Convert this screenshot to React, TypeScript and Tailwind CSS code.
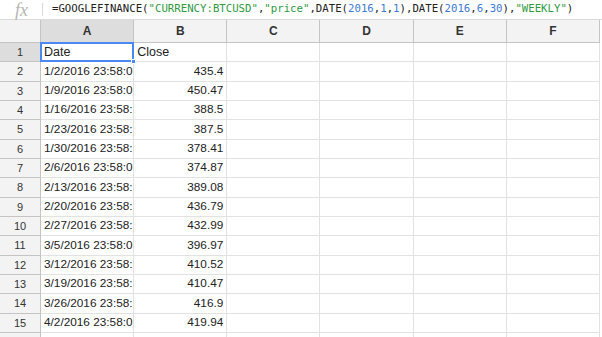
import React from "react";

// dates shown as the cells clip them
const rows: [string, string][] = [
  ["1/2/2016 23:58:0", "435.4"],
  ["1/9/2016 23:58:0", "450.47"],
  ["1/16/2016 23:58:", "388.5"],
  ["1/23/2016 23:58:", "387.5"],
  ["1/30/2016 23:58:", "378.41"],
  ["2/6/2016 23:58:0", "374.87"],
  ["2/13/2016 23:58:", "389.08"],
  ["2/20/2016 23:58:", "436.79"],
  ["2/27/2016 23:58:", "432.99"],
  ["3/5/2016 23:58:0", "396.97"],
  ["3/12/2016 23:58:", "410.52"],
  ["3/19/2016 23:58:", "410.47"],
  ["3/26/2016 23:58:", "416.9"],
  ["4/2/2016 23:58:0", "419.94"],
];

const cols = ["A", "B", "C", "D", "E", "F"];

const Str = ({ children }: { children: React.ReactNode }) => (
  <span className="text-[#2f9a3f]">{children}</span>
);
const Num = ({ children }: { children: React.ReactNode }) => (
  <span className="text-[#3d7ad6]">{children}</span>
);

function FormulaBar() {
  return (
    <div className="flex h-[20px] items-center border-b border-[#dadada] bg-white">
      <div className="flex w-[42px] items-center">
        <span className="ml-[15px] font-['Liberation_Serif',serif] text-[18px] italic leading-none text-[#b5b5b5]">
          fx
        </span>
      </div>
      <div className="h-[13px] w-px bg-[#d9d9d9]" />
      <div className="ml-[9px] whitespace-nowrap font-['DejaVu_Sans_Mono',monospace] text-[10.7px] leading-none text-[#222]">
        =GOOGLEFINANCE(<Str>"CURRENCY:BTCUSD"</Str>,<Str>"price"</Str>,DATE(
        <Num>2016</Num>,<Num>1</Num>,<Num>1</Num>),DATE(<Num>2016</Num>,<Num>6</Num>,
        <Num>30</Num>),<Str>"WEEKLY"</Str>)
      </div>
    </div>
  );
}

export default function App() {
  return (
    <div className="h-[337px] w-[602px] overflow-hidden bg-white font-['Liberation_Sans',Arial,sans-serif] text-[#222]">
      <FormulaBar />
      <div className="grid w-[600px] grid-cols-[41px_repeat(6,minmax(0,1fr))]">
        {/* column headers */}
        <div className="h-[23px] border-b border-r border-[#c4c4c4] bg-[#f3f3f3]" />
        {cols.map((c, i) => (
          <div
            key={c}
            className={`flex h-[23px] items-center justify-center border-b border-r border-[#c4c4c4] text-[12px] font-bold text-[#333] ${
              i === 0 ? "bg-[#dddddd]" : "bg-[#f3f3f3]"
            }`}
          >
            {c}
          </div>
        ))}

        {/* row 1 */}
        <div className="flex h-[19.33px] items-center justify-center border-b border-r border-[#c4c4c4] bg-[#dddddd] text-[11px] text-[#333]">
          1
        </div>
        <div className="relative flex h-[19.33px] items-center border-b border-r border-[#e2e2e2] px-[3px] text-[12.5px]">
          <div className="absolute -left-px -top-px bottom-[-1px] right-[-1px] border-2 border-[#4a89f3]" />
          <div className="absolute bottom-[-3px] right-[-3px] h-[5px] w-[5px] border border-white bg-[#4a89f3]" />
          Date
        </div>
        <div className="flex h-[19.33px] items-center border-b border-r border-[#e2e2e2] px-[3px] text-[12.5px]">
          Close
        </div>
        {[0, 1, 2, 3].map((k) => (
          <div key={k} className="h-[19.33px] border-b border-r border-[#e2e2e2]" />
        ))}

        {rows.map(([d, v], i) => (
          <React.Fragment key={i}>
            <div className="flex h-[19.33px] items-center justify-center border-b border-r border-[#c4c4c4] bg-[#f3f3f3] text-[11px] text-[#333]">
              {i + 2}
            </div>
            <div className="flex h-[19.33px] items-center whitespace-nowrap border-b border-r border-[#e2e2e2] pl-[3px] text-[11.8px]">
              {d}
            </div>
            <div className="flex h-[19.33px] items-center justify-end border-b border-r border-[#e2e2e2] pr-[3px] text-[11.8px]">
              {v}
            </div>
            {[0, 1, 2, 3].map((k) => (
              <div key={k} className="h-[19.33px] border-b border-r border-[#e2e2e2]" />
            ))}
          </React.Fragment>
        ))}

        <div className="h-[20px] border-r border-[#c4c4c4] bg-[#f3f3f3]" />
        {cols.map((c) => (
          <div key={c} className="h-[20px] border-r border-[#e2e2e2]" />
        ))}
      </div>
    </div>
  );
}
